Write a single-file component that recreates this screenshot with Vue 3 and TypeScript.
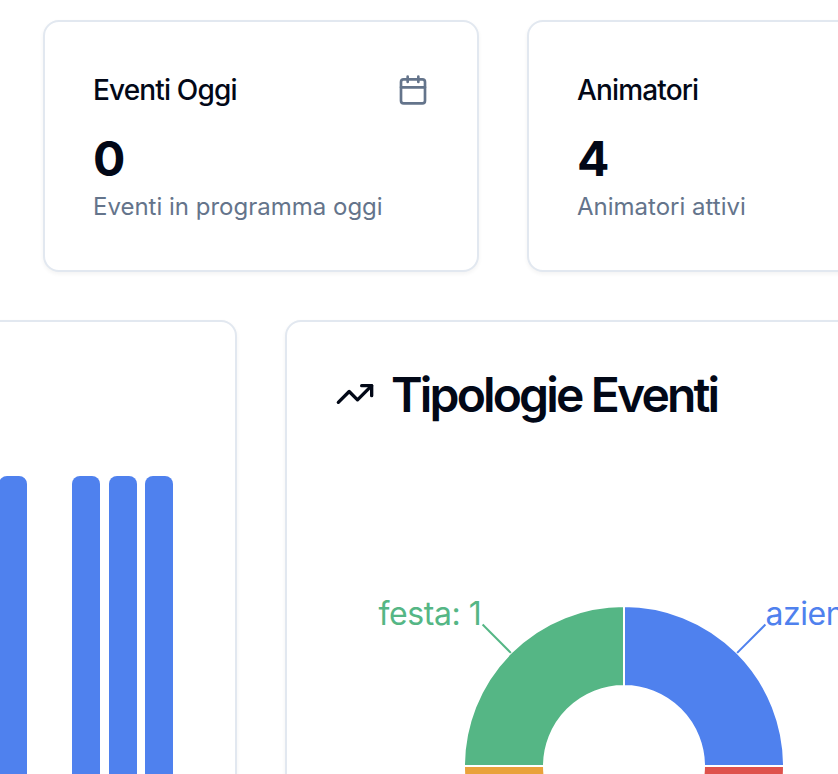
<script setup lang="ts">
interface Stat {
  title: string
  value: number
  note: string
  icon?: 'calendar'
}

const stats: Stat[] = [
  { title: 'Eventi Oggi', value: 0, note: 'Eventi in programma oggi', icon: 'calendar' },
  { title: 'Animatori', value: 4, note: 'Animatori attivi' },
]

const bars: number[] = [1, 0, 1, 1, 1]

interface Slice {
  name: string
  value: number
  color: string
  start: number
}

const slices: Slice[] = [
  { name: 'azienda', value: 1, color: '#4f81ee', start: 0 },
  { name: 'festa', value: 1, color: '#55b685', start: 90 },
  { name: 'altro', value: 1, color: '#e9a23b', start: 180 },
  { name: 'spettacolo', value: 1, color: '#de524c', start: 270 },
]

const cx = 290
const cy = 296
const outer = 160
const inner = 80

function point(radius: number, degrees: number): string {
  const a = (degrees * Math.PI) / 180
  return `${(cx + radius * Math.cos(a)).toFixed(2)} ${(cy - radius * Math.sin(a)).toFixed(2)}`
}

function slicePath(start: number): string {
  const end = start + 90
  return [
    `M ${point(outer, start)}`,
    `A ${outer} ${outer} 0 0 0 ${point(outer, end)}`,
    `L ${point(inner, end)}`,
    `A ${inner} ${inner} 0 0 1 ${point(inner, start)}`,
    'Z',
  ].join(' ')
}

function leaderPath(start: number): string {
  return `M ${point(outer, start + 45)} L ${point(200, start + 45)}`
}
</script>

<template>
  <main class="page">
    <section class="stats">
      <article v-for="stat in stats" :key="stat.title" class="card stat">
        <header class="stat-head">
          <h3 class="stat-title">{{ stat.title }}</h3>
          <svg v-if="stat.icon" class="stat-icon" viewBox="0 0 24 24">
            <path d="M8 2v4M16 2v4M3 10h18" />
            <rect x="3" y="4" width="18" height="18" rx="2" />
          </svg>
        </header>
        <div class="stat-value">{{ stat.value }}</div>
        <p class="stat-note">{{ stat.note }}</p>
      </article>
    </section>

    <section class="charts">
      <article class="card bar-card">
        <div class="bars">
          <div v-for="(bar, i) in bars" :key="i" class="bar" :class="{ empty: !bar }"></div>
        </div>
      </article>

      <article class="card pie-card">
        <h2 class="chart-title">
          <svg class="trend-icon" viewBox="0 0 24 24">
            <path d="M22 7 13.5 15.5 8.5 10.5 2 17" />
            <path d="M16 7h6v6" />
          </svg>
          <span class="chart-name">Tipologie Eventi</span>
        </h2>
        <svg class="pie" width="580" height="500" viewBox="0 0 580 500">
          <path
            v-for="s in slices"
            :key="s.name"
            :d="slicePath(s.start)"
            :fill="s.color"
            stroke="#fff"
            stroke-width="2"
          />
          <path
            v-for="s in slices.slice(0, 2)"
            :key="`${s.name}-line`"
            :d="leaderPath(s.start)"
            :stroke="s.color"
            stroke-width="2"
            fill="none"
          />
          <text class="pie-label" x="431.4" y="155" fill="#4f81ee">azienda: 1</text>
          <text class="pie-label" x="147.5" y="155" fill="#55b685" text-anchor="end">festa: 1</text>
        </svg>
      </article>
    </section>
  </main>
</template>

<style>
body {
  margin: 0;
  background: #fff;
}
</style>

<style scoped>
.page {
  box-sizing: border-box;
  width: 838px;
  height: 774px;
  padding-top: 20px;
  overflow: hidden;
  background: #fff;
  color: #020817;
  font-family: Inter, 'Liberation Sans', sans-serif;
}

.card {
  box-sizing: border-box;
  flex: none;
  border: 2px solid #e2e8f0;
  border-radius: 16px;
  background: #fff;
  box-shadow: 0 2px 4px rgba(0, 0, 0, 0.05);
}

.stats {
  display: flex;
  gap: 48px;
  padding-left: 43px;
}

.stat {
  width: 436px;
  height: 252px;
  padding: 48px;
}

.stat-head {
  display: flex;
  align-items: center;
  justify-content: space-between;
  height: 40px;
  padding-bottom: 16px;
}

.stat-title {
  margin: 0;
  font-size: 28px;
  line-height: 40px;
  font-weight: 500;
  letter-spacing: -0.85px;
}

.stat-icon {
  width: 32px;
  height: 32px;
  fill: none;
  stroke: #64748b;
  stroke-width: 2;
  stroke-linecap: round;
  stroke-linejoin: round;
}

.stat-value {
  font-size: 48px;
  line-height: 66px;
  font-weight: 700;
}

.stat-note {
  margin: 0;
  color: #64748b;
  font-size: 24px;
  line-height: 30px;
  white-space: nowrap;
}

.charts {
  display: flex;
  gap: 48px;
  margin-top: 48px;
  margin-left: -203px;
}

.bar-card {
  display: flex;
  align-items: flex-end;
  justify-content: flex-end;
  width: 440px;
  height: 640px;
  padding-right: 62px;
}

.bars {
  display: flex;
  gap: 8.5px;
  height: 482px;
}

.bar {
  width: 28px;
  border-radius: 8px 8px 0 0;
  background: #4f81ee;
}

.bar.empty {
  visibility: hidden;
}

.pie-card {
  width: 682px;
  height: 640px;
  padding: 48px;
}

.chart-title {
  display: flex;
  align-items: center;
  gap: 16px;
  height: 48px;
  margin: 0;
  font-size: 48px;
  line-height: 48px;
  font-weight: 600;
  letter-spacing: -2.85px;
  white-space: nowrap;
}

.chart-name {
  padding-top: 2px;
}

.trend-icon {
  flex: none;
  width: 40px;
  height: 40px;
  fill: none;
  stroke: currentColor;
  stroke-width: 2;
  stroke-linecap: round;
  stroke-linejoin: round;
}

.pie {
  display: block;
  margin-top: 52px;
  margin-left: -1px;
  overflow: visible;
}

.pie-label {
  font-size: 32px;
  letter-spacing: -0.4px;
}
</style>
